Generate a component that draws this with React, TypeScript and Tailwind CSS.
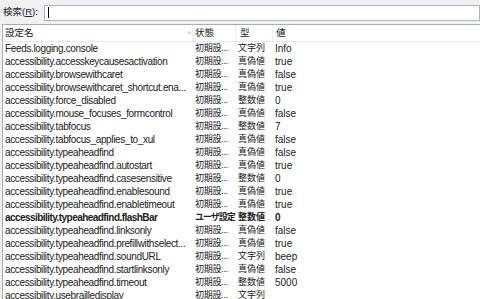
import React from "react";

type Row = { name: string; status: string; type: string; value: string; bold?: boolean };

const rows: Row[] = [
  { name: "Feeds.logging.console", status: "初期設...", type: "文字列", value: "Info" },
  { name: "accessibility.accesskeycausesactivation", status: "初期設...", type: "真偽値", value: "true" },
  { name: "accessibility.browsewithcaret", status: "初期設...", type: "真偽値", value: "false" },
  { name: "accessibility.browsewithcaret_shortcut.ena...", status: "初期設...", type: "真偽値", value: "true" },
  { name: "accessibility.force_disabled", status: "初期設...", type: "整数値", value: "0" },
  { name: "accessibility.mouse_focuses_formcontrol", status: "初期設...", type: "真偽値", value: "false" },
  { name: "accessibility.tabfocus", status: "初期設...", type: "整数値", value: "7" },
  { name: "accessibility.tabfocus_applies_to_xul", status: "初期設...", type: "真偽値", value: "false" },
  { name: "accessibility.typeaheadfind", status: "初期設...", type: "真偽値", value: "false" },
  { name: "accessibility.typeaheadfind.autostart", status: "初期設...", type: "真偽値", value: "true" },
  { name: "accessibility.typeaheadfind.casesensitive", status: "初期設...", type: "整数値", value: "0" },
  { name: "accessibility.typeaheadfind.enablesound", status: "初期設...", type: "真偽値", value: "true" },
  { name: "accessibility.typeaheadfind.enabletimeout", status: "初期設...", type: "真偽値", value: "true" },
  { name: "accessibility.typeaheadfind.flashBar", status: "ユーザ設定", type: "整数値", value: "0", bold: true },
  { name: "accessibility.typeaheadfind.linksonly", status: "初期設...", type: "真偽値", value: "false" },
  { name: "accessibility.typeaheadfind.prefillwithselect...", status: "初期設...", type: "真偽値", value: "true" },
  { name: "accessibility.typeaheadfind.soundURL", status: "初期設...", type: "文字列", value: "beep" },
  { name: "accessibility.typeaheadfind.startlinksonly", status: "初期設...", type: "真偽値", value: "false" },
  { name: "accessibility.typeaheadfind.timeout", status: "初期設...", type: "整数値", value: "5000" },
  { name: "accessibility.usebrailledisplay", status: "初期設...", type: "文字列", value: "" },
];

const font = "font-['Liberation_Sans','Noto_Sans_CJK_JP',sans-serif]";
const cols = "grid grid-cols-[190px_43px_37px_1fr]";

export default function App() {
  return (
    <div className={`w-[480px] h-[299px] overflow-hidden bg-[#f0f0f0] text-[#222] ${font}`}>
      <div className="flex items-center h-[24px] pl-[3px] pt-[1px]">
        <span className="text-[9.5px] w-[41px] whitespace-nowrap">
          検索(<span className="underline">R</span>):
        </span>
        <div className="flex-1 h-[16px] bg-white border border-[#a8b8cc] flex items-center pl-[3px]">
          <div className="w-px h-[11px] bg-black" />
        </div>
      </div>
      <div className="ml-[2px] h-[275px] bg-white border-l border-t border-[#a9aeb5] overflow-hidden">
        <div className={`${cols} h-[17px] items-center border-b border-[#e4e7ec] text-[9.5px]`}>
          <div className="pl-[2px] relative border-r border-[#eef0f3] h-full flex items-center">
            設定名
            <span className="absolute right-[1px] top-[4px] text-[7px] text-[#8a8a8a]">^</span>
          </div>
          <div className="pl-[2px] border-r border-[#eef0f3] h-full flex items-center">状態</div>
          <div className="pl-[4px] border-r border-[#eef0f3] h-full flex items-center">型</div>
          <div className="pl-[3px]">値</div>
        </div>
        {rows.map((r) => (
          <div
            key={r.name}
            className={`${cols} h-[13px] items-center leading-[13px] ${r.bold ? "font-bold" : ""}`}
          >
            <div
              className={`pl-[2px] whitespace-nowrap overflow-hidden text-[10px] ${r.bold ? "tracking-[-0.55px]" : "tracking-[-0.35px]"}`}
            >
              {r.name}
            </div>
            <div
              className={`pl-[2px] whitespace-nowrap text-[9px] ${r.bold ? "tracking-[-1px]" : "tracking-[-0.3px]"}`}
            >
              {r.status}
            </div>
            <div className="pl-[2px] whitespace-nowrap text-[9px]">{r.type}</div>
            <div className="pl-[2px] whitespace-nowrap text-[10px]">{r.value}</div>
          </div>
        ))}
      </div>
    </div>
  );
}
